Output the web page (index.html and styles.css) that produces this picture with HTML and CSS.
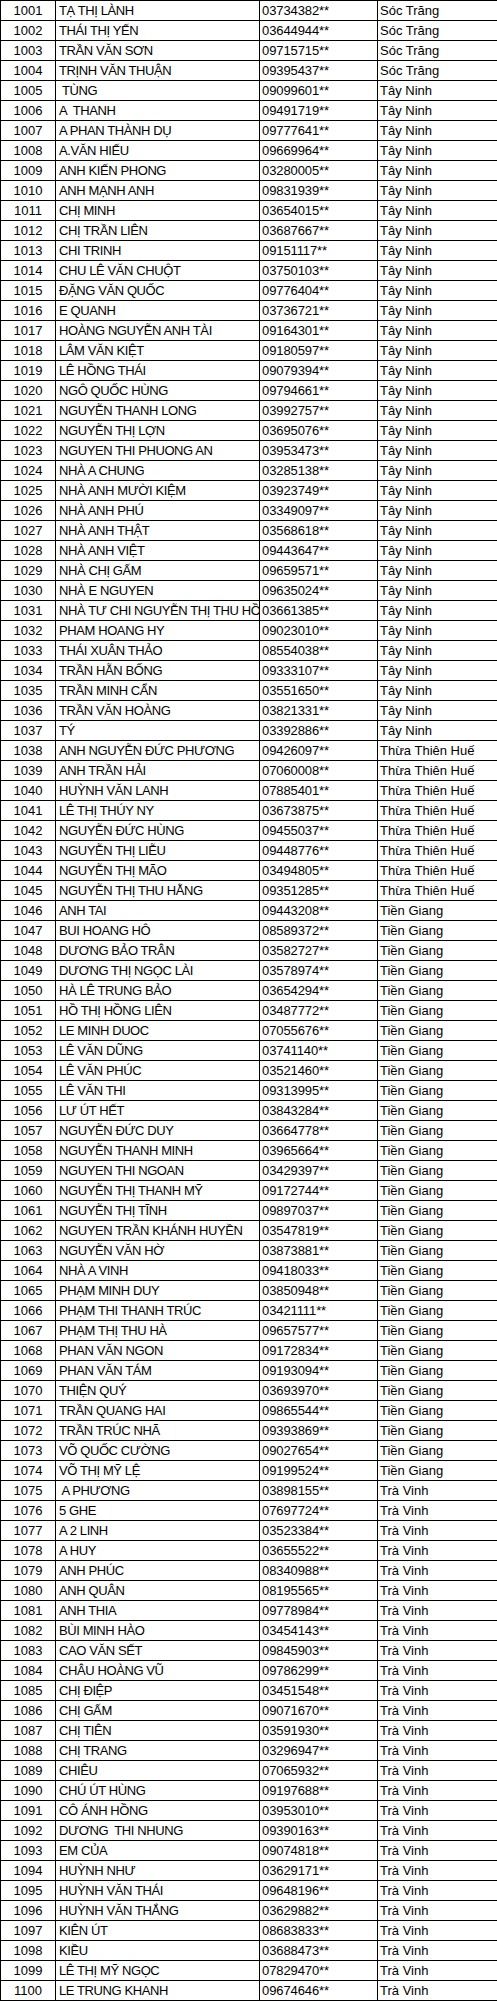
FILE: index.html
```html
<!DOCTYPE html>
<html lang="vi">
<head>
<meta charset="utf-8">
<title>Danh sách</title>
<link rel="stylesheet" href="styles.css">
</head>
<body>
<table class="sheet">
<colgroup><col class="c-no"><col class="c-name"><col class="c-phone"><col class="c-prov"></colgroup>
<tbody>
<tr><td class="no">1001</td><td class="name">TẠ THỊ LÀNH</td><td class="phone">03734382**</td><td class="prov">Sóc Trăng</td></tr>
<tr><td class="no">1002</td><td class="name">THÁI THỊ YẾN</td><td class="phone">03644944**</td><td class="prov">Sóc Trăng</td></tr>
<tr><td class="no">1003</td><td class="name">TRẦN VĂN SƠN</td><td class="phone">09715715**</td><td class="prov">Sóc Trăng</td></tr>
<tr><td class="no">1004</td><td class="name">TRỊNH VĂN THUẬN</td><td class="phone">09395437**</td><td class="prov">Sóc Trăng</td></tr>
<tr><td class="no">1005</td><td class="name"> TÙNG</td><td class="phone">09099601**</td><td class="prov">Tây Ninh</td></tr>
<tr><td class="no">1006</td><td class="name">A  THANH</td><td class="phone">09491719**</td><td class="prov">Tây Ninh</td></tr>
<tr><td class="no">1007</td><td class="name">A PHAN THÀNH DỤ</td><td class="phone">09777641**</td><td class="prov">Tây Ninh</td></tr>
<tr><td class="no">1008</td><td class="name">A.VĂN HIẾU</td><td class="phone">09669964**</td><td class="prov">Tây Ninh</td></tr>
<tr><td class="no">1009</td><td class="name">ANH KIẾN PHONG</td><td class="phone">03280005**</td><td class="prov">Tây Ninh</td></tr>
<tr><td class="no">1010</td><td class="name">ANH MẠNH ANH</td><td class="phone">09831939**</td><td class="prov">Tây Ninh</td></tr>
<tr><td class="no">1011</td><td class="name">CHỊ MINH</td><td class="phone">03654015**</td><td class="prov">Tây Ninh</td></tr>
<tr><td class="no">1012</td><td class="name">CHỊ TRẦN LIÊN</td><td class="phone">03687667**</td><td class="prov">Tây Ninh</td></tr>
<tr><td class="no">1013</td><td class="name">CHI TRINH</td><td class="phone">09151117**</td><td class="prov">Tây Ninh</td></tr>
<tr><td class="no">1014</td><td class="name">CHU LÊ VĂN CHUỘT</td><td class="phone">03750103**</td><td class="prov">Tây Ninh</td></tr>
<tr><td class="no">1015</td><td class="name">ĐẶNG VĂN QUỐC</td><td class="phone">09776404**</td><td class="prov">Tây Ninh</td></tr>
<tr><td class="no">1016</td><td class="name">E QUANH</td><td class="phone">03736721**</td><td class="prov">Tây Ninh</td></tr>
<tr><td class="no">1017</td><td class="name">HOÀNG NGUYỄN ANH TÀI</td><td class="phone">09164301**</td><td class="prov">Tây Ninh</td></tr>
<tr><td class="no">1018</td><td class="name">LÂM VĂN KIỆT</td><td class="phone">09180597**</td><td class="prov">Tây Ninh</td></tr>
<tr><td class="no">1019</td><td class="name">LÊ HỒNG THÁI</td><td class="phone">09079394**</td><td class="prov">Tây Ninh</td></tr>
<tr><td class="no">1020</td><td class="name">NGÔ QUỐC HÙNG</td><td class="phone">09794661**</td><td class="prov">Tây Ninh</td></tr>
<tr><td class="no">1021</td><td class="name">NGUYỄN THANH LONG</td><td class="phone">03992757**</td><td class="prov">Tây Ninh</td></tr>
<tr><td class="no">1022</td><td class="name">NGUYỄN THỊ LỢN</td><td class="phone">03695076**</td><td class="prov">Tây Ninh</td></tr>
<tr><td class="no">1023</td><td class="name">NGUYEN THI PHUONG AN</td><td class="phone">03953473**</td><td class="prov">Tây Ninh</td></tr>
<tr><td class="no">1024</td><td class="name">NHÀ A CHUNG</td><td class="phone">03285138**</td><td class="prov">Tây Ninh</td></tr>
<tr><td class="no">1025</td><td class="name">NHÀ ANH MƯỜI KIỆM</td><td class="phone">03923749**</td><td class="prov">Tây Ninh</td></tr>
<tr><td class="no">1026</td><td class="name">NHÀ ANH PHÚ</td><td class="phone">03349097**</td><td class="prov">Tây Ninh</td></tr>
<tr><td class="no">1027</td><td class="name">NHÀ ANH THẬT</td><td class="phone">03568618**</td><td class="prov">Tây Ninh</td></tr>
<tr><td class="no">1028</td><td class="name">NHÀ ANH VIỆT</td><td class="phone">09443647**</td><td class="prov">Tây Ninh</td></tr>
<tr><td class="no">1029</td><td class="name">NHÀ CHỊ GẤM</td><td class="phone">09659571**</td><td class="prov">Tây Ninh</td></tr>
<tr><td class="no">1030</td><td class="name">NHÀ E NGUYEN</td><td class="phone">09635024**</td><td class="prov">Tây Ninh</td></tr>
<tr><td class="no">1031</td><td class="name">NHÀ TƯ CHI NGUYỄN THỊ THU HỒ</td><td class="phone">03661385**</td><td class="prov">Tây Ninh</td></tr>
<tr><td class="no">1032</td><td class="name">PHAM HOANG HY</td><td class="phone">09023010**</td><td class="prov">Tây Ninh</td></tr>
<tr><td class="no">1033</td><td class="name">THÁI XUÂN THẢO</td><td class="phone">08554038**</td><td class="prov">Tây Ninh</td></tr>
<tr><td class="no">1034</td><td class="name">TRẦN HẪN BỐNG</td><td class="phone">09333107**</td><td class="prov">Tây Ninh</td></tr>
<tr><td class="no">1035</td><td class="name">TRẦN MINH CẨN</td><td class="phone">03551650**</td><td class="prov">Tây Ninh</td></tr>
<tr><td class="no">1036</td><td class="name">TRẦN VĂN HOÀNG</td><td class="phone">03821331**</td><td class="prov">Tây Ninh</td></tr>
<tr><td class="no">1037</td><td class="name">TÝ</td><td class="phone">03392886**</td><td class="prov">Tây Ninh</td></tr>
<tr><td class="no">1038</td><td class="name">ANH NGUYỄN ĐỨC PHƯƠNG</td><td class="phone">09426097**</td><td class="prov">Thừa Thiên Huế</td></tr>
<tr><td class="no">1039</td><td class="name">ANH TRẦN HẢI</td><td class="phone">07060008**</td><td class="prov">Thừa Thiên Huế</td></tr>
<tr><td class="no">1040</td><td class="name">HUỲNH VĂN LANH</td><td class="phone">07885401**</td><td class="prov">Thừa Thiên Huế</td></tr>
<tr><td class="no">1041</td><td class="name">LÊ THỊ THÚY NY</td><td class="phone">03673875**</td><td class="prov">Thừa Thiên Huế</td></tr>
<tr><td class="no">1042</td><td class="name">NGUYỄN ĐỨC HÙNG</td><td class="phone">09455037**</td><td class="prov">Thừa Thiên Huế</td></tr>
<tr><td class="no">1043</td><td class="name">NGUYỄN THỊ LIỄU</td><td class="phone">09448776**</td><td class="prov">Thừa Thiên Huế</td></tr>
<tr><td class="no">1044</td><td class="name">NGUYỄN THỊ MÃO</td><td class="phone">03494805**</td><td class="prov">Thừa Thiên Huế</td></tr>
<tr><td class="no">1045</td><td class="name">NGUYỄN THỊ THU HẰNG</td><td class="phone">09351285**</td><td class="prov">Thừa Thiên Huế</td></tr>
<tr><td class="no">1046</td><td class="name">ANH TAI</td><td class="phone">09443208**</td><td class="prov">Tiền Giang</td></tr>
<tr><td class="no">1047</td><td class="name">BUI HOANG HÔ</td><td class="phone">08589372**</td><td class="prov">Tiền Giang</td></tr>
<tr><td class="no">1048</td><td class="name">DƯƠNG BẢO TRÂN</td><td class="phone">03582727**</td><td class="prov">Tiền Giang</td></tr>
<tr><td class="no">1049</td><td class="name">DƯƠNG THỊ NGỌC LÀI</td><td class="phone">03578974**</td><td class="prov">Tiền Giang</td></tr>
<tr><td class="no">1050</td><td class="name">HÀ LÊ TRUNG BẢO</td><td class="phone">03654294**</td><td class="prov">Tiền Giang</td></tr>
<tr><td class="no">1051</td><td class="name">HỒ THỊ HỒNG LIÊN</td><td class="phone">03487772**</td><td class="prov">Tiền Giang</td></tr>
<tr><td class="no">1052</td><td class="name">LE MINH DUOC</td><td class="phone">07055676**</td><td class="prov">Tiền Giang</td></tr>
<tr><td class="no">1053</td><td class="name">LÊ VĂN DŨNG</td><td class="phone">03741140**</td><td class="prov">Tiền Giang</td></tr>
<tr><td class="no">1054</td><td class="name">LÊ VĂN PHÚC</td><td class="phone">03521460**</td><td class="prov">Tiền Giang</td></tr>
<tr><td class="no">1055</td><td class="name">LÊ VĂN THI</td><td class="phone">09313995**</td><td class="prov">Tiền Giang</td></tr>
<tr><td class="no">1056</td><td class="name">LƯ ÚT HẾT</td><td class="phone">03843284**</td><td class="prov">Tiền Giang</td></tr>
<tr><td class="no">1057</td><td class="name">NGUYỄN ĐỨC DUY</td><td class="phone">03664778**</td><td class="prov">Tiền Giang</td></tr>
<tr><td class="no">1058</td><td class="name">NGUYỄN THANH MINH</td><td class="phone">03965664**</td><td class="prov">Tiền Giang</td></tr>
<tr><td class="no">1059</td><td class="name">NGUYEN THI NGOAN</td><td class="phone">03429397**</td><td class="prov">Tiền Giang</td></tr>
<tr><td class="no">1060</td><td class="name">NGUYỄN THỊ THANH MỸ</td><td class="phone">09172744**</td><td class="prov">Tiền Giang</td></tr>
<tr><td class="no">1061</td><td class="name">NGUYỄN THỊ TĨNH</td><td class="phone">09897037**</td><td class="prov">Tiền Giang</td></tr>
<tr><td class="no">1062</td><td class="name">NGUYEN TRẦN KHÁNH HUYỀN</td><td class="phone">03547819**</td><td class="prov">Tiền Giang</td></tr>
<tr><td class="no">1063</td><td class="name">NGUYỄN VĂN HỜ</td><td class="phone">03873881**</td><td class="prov">Tiền Giang</td></tr>
<tr><td class="no">1064</td><td class="name">NHÀ A VINH</td><td class="phone">09418033**</td><td class="prov">Tiền Giang</td></tr>
<tr><td class="no">1065</td><td class="name">PHẠM MINH DUY</td><td class="phone">03850948**</td><td class="prov">Tiền Giang</td></tr>
<tr><td class="no">1066</td><td class="name">PHẠM THI THANH TRÚC</td><td class="phone">03421111**</td><td class="prov">Tiền Giang</td></tr>
<tr><td class="no">1067</td><td class="name">PHẠM THỊ THU HÀ</td><td class="phone">09657577**</td><td class="prov">Tiền Giang</td></tr>
<tr><td class="no">1068</td><td class="name">PHAN VĂN NGON</td><td class="phone">09172834**</td><td class="prov">Tiền Giang</td></tr>
<tr><td class="no">1069</td><td class="name">PHAN VĂN TÁM</td><td class="phone">09193094**</td><td class="prov">Tiền Giang</td></tr>
<tr><td class="no">1070</td><td class="name">THIỆN QUÝ</td><td class="phone">03693970**</td><td class="prov">Tiền Giang</td></tr>
<tr><td class="no">1071</td><td class="name">TRẦN QUANG HAI</td><td class="phone">09865544**</td><td class="prov">Tiền Giang</td></tr>
<tr><td class="no">1072</td><td class="name">TRẦN TRÚC NHÃ</td><td class="phone">09393869**</td><td class="prov">Tiền Giang</td></tr>
<tr><td class="no">1073</td><td class="name">VÕ QUỐC CƯỜNG</td><td class="phone">09027654**</td><td class="prov">Tiền Giang</td></tr>
<tr><td class="no">1074</td><td class="name">VÕ THỊ MỸ LỆ</td><td class="phone">09199524**</td><td class="prov">Tiền Giang</td></tr>
<tr><td class="no">1075</td><td class="name"> A PHƯƠNG</td><td class="phone">03898155**</td><td class="prov">Trà Vinh</td></tr>
<tr><td class="no">1076</td><td class="name">5 GHE</td><td class="phone">07697724**</td><td class="prov">Trà Vinh</td></tr>
<tr><td class="no">1077</td><td class="name">A 2 LINH</td><td class="phone">03523384**</td><td class="prov">Trà Vinh</td></tr>
<tr><td class="no">1078</td><td class="name">A HUY</td><td class="phone">03655522**</td><td class="prov">Trà Vinh</td></tr>
<tr><td class="no">1079</td><td class="name">ANH PHÚC</td><td class="phone">08340988**</td><td class="prov">Trà Vinh</td></tr>
<tr><td class="no">1080</td><td class="name">ANH QUÂN</td><td class="phone">08195565**</td><td class="prov">Trà Vinh</td></tr>
<tr><td class="no">1081</td><td class="name">ANH THIA</td><td class="phone">09778984**</td><td class="prov">Trà Vinh</td></tr>
<tr><td class="no">1082</td><td class="name">BÙI MINH HÀO</td><td class="phone">03454143**</td><td class="prov">Trà Vinh</td></tr>
<tr><td class="no">1083</td><td class="name">CAO VĂN SẾT</td><td class="phone">09845903**</td><td class="prov">Trà Vinh</td></tr>
<tr><td class="no">1084</td><td class="name">CHÂU HOÀNG VŨ</td><td class="phone">09786299**</td><td class="prov">Trà Vinh</td></tr>
<tr><td class="no">1085</td><td class="name">CHỊ ĐIỆP</td><td class="phone">03451548**</td><td class="prov">Trà Vinh</td></tr>
<tr><td class="no">1086</td><td class="name">CHỊ GẤM</td><td class="phone">09071670**</td><td class="prov">Trà Vinh</td></tr>
<tr><td class="no">1087</td><td class="name">CHỊ TIÊN</td><td class="phone">03591930**</td><td class="prov">Trà Vinh</td></tr>
<tr><td class="no">1088</td><td class="name">CHỊ TRANG</td><td class="phone">03296947**</td><td class="prov">Trà Vinh</td></tr>
<tr><td class="no">1089</td><td class="name">CHIÊU</td><td class="phone">07065932**</td><td class="prov">Trà Vinh</td></tr>
<tr><td class="no">1090</td><td class="name">CHÚ ÚT HÙNG</td><td class="phone">09197688**</td><td class="prov">Trà Vinh</td></tr>
<tr><td class="no">1091</td><td class="name">CÔ ÁNH HỒNG</td><td class="phone">03953010**</td><td class="prov">Trà Vinh</td></tr>
<tr><td class="no">1092</td><td class="name">DƯƠNG  THI NHUNG</td><td class="phone">09390163**</td><td class="prov">Trà Vinh</td></tr>
<tr><td class="no">1093</td><td class="name">EM CỦA</td><td class="phone">09074818**</td><td class="prov">Trà Vinh</td></tr>
<tr><td class="no">1094</td><td class="name">HUỲNH NHƯ</td><td class="phone">03629171**</td><td class="prov">Trà Vinh</td></tr>
<tr><td class="no">1095</td><td class="name">HUỲNH VĂN THÁI</td><td class="phone">09648196**</td><td class="prov">Trà Vinh</td></tr>
<tr><td class="no">1096</td><td class="name">HUỲNH VĂN THẮNG</td><td class="phone">03629882**</td><td class="prov">Trà Vinh</td></tr>
<tr><td class="no">1097</td><td class="name">KIÊN ÚT</td><td class="phone">08683833**</td><td class="prov">Trà Vinh</td></tr>
<tr><td class="no">1098</td><td class="name">KIỀU</td><td class="phone">03688473**</td><td class="prov">Trà Vinh</td></tr>
<tr><td class="no">1099</td><td class="name">LÊ THỊ MỸ NGỌC</td><td class="phone">07829470**</td><td class="prov">Trà Vinh</td></tr>
<tr><td class="no">1100</td><td class="name">LE TRUNG KHANH</td><td class="phone">09674646**</td><td class="prov">Trà Vinh</td></tr>
</tbody>
</table>
</body>
</html>
```
FILE: styles.css
```css
html, body {
  margin: 0;
  padding: 0;
  background: #ffffff;
}

.sheet {
  border-collapse: collapse;
  table-layout: fixed;
  width: 497px;
  font-family: "Liberation Sans", Arial, sans-serif;
  font-size: 13px;
  color: #000000;
}

.c-no { width: 55px; }
.c-name { width: 204px; }
.c-phone { width: 118px; }
.c-prov { width: 120px; }

.sheet td {
  border: 1px solid #000000;
  height: 19px;
  line-height: 19px;
  padding: 0 0 0 2px;
  white-space: pre;
  overflow: hidden;
  vertical-align: middle;
}

.sheet td.no {
  text-align: center;
  padding: 0;
}

.sheet td.name {
  padding-left: 3px;
  letter-spacing: -0.4px;
}

.sheet td.phone {
  padding-left: 2px;
  letter-spacing: -0.1px;
}

.sheet td.prov {
  padding-left: 2px;
}
```
